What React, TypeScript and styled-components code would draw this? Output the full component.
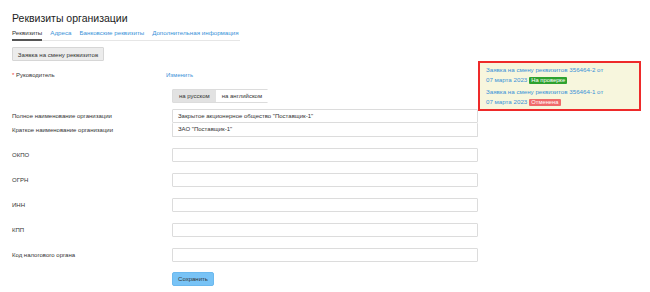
import React from "react";
import styled, { createGlobalStyle } from "styled-components";

const Global = createGlobalStyle`
  html, body { margin: 0; padding: 0; background: #fff; }
  body { font-family: "Liberation Sans", Arial, sans-serif; color: #333; }
  * { box-sizing: border-box; }
`;

const Page = styled.div`
  width: 650px;
  height: 292px;
  padding: 0 0 0 12px;
  overflow: hidden;
`;

const Title = styled.h1`
  margin: 11px 0 0;
  font-size: 10.5px;
  line-height: 14px;
  font-weight: normal;
  color: #222;
`;

const Tabs = styled.div`
  display: flex;
  gap: 8px;
  width: 228px;
  margin-top: 1px;
  border-bottom: 1px solid #e6e6e6;
`;

const Tab = styled.a<{ $active?: boolean }>`
  font-size: 6.2px;
  line-height: 10px;
  padding: 2px 0 1px;
  margin-bottom: -1px;
  color: ${(p) => (p.$active ? "#333" : "#3a92d8")};
  border-bottom: 2px solid ${(p) => (p.$active ? "#555" : "transparent")};
  white-space: nowrap;
`;

const GrayButton = styled.button`
  display: block;
  margin-top: 6px;
  height: 14px;
  width: 92px;
  padding: 0;
  font-family: inherit;
  font-size: 6.1px;
  color: #333;
  background: #ececec;
  border: 1px solid #d6d6d6;
  border-radius: 1px;
`;

const Content = styled.div`
  display: flex;
  align-items: flex-start;
`;

const Form = styled.div`
  width: 466px;
  padding-top: 7px;
`;

const Row = styled.div<{ $mt?: number }>`
  display: grid;
  grid-template-columns: 160px 306px;
  align-items: center;
  height: 14px;
  margin-top: ${(p) => p.$mt ?? 0}px;
`;

const Label = styled.div`
  font-size: 6px;
  line-height: 14px;
  color: #333;
  white-space: nowrap;
`;

const Req = styled.span`
  color: #e33;
`;

const Link = styled.a`
  font-size: 6px;
  line-height: 14px;
  color: #3a92d8;
  margin-left: -6px;
`;

const Toggle = styled.div`
  display: flex;
  width: 96px;
  height: 14px;
  border: 1px solid #dcdcdc;
  border-radius: 1px;
`;

const ToggleItem = styled.div<{ $active?: boolean }>`
  font-size: 6px;
  line-height: 12px;
  padding: 0 6px;
  background: ${(p) => (p.$active ? "#e2e2e2" : "#fff")};
  white-space: nowrap;
`;

const Input = styled.div<{ $joined?: boolean }>`
  height: 14px;
  border: 1px solid #dcdcdc;
  border-top-width: ${(p) => (p.$joined ? 0 : 1)}px;
  border-radius: 1px;
  font-size: 6px;
  line-height: 12px;
  padding-left: 5px;
  color: #333;
  white-space: nowrap;
`;

const SaveButton = styled.button`
  height: 14px;
  width: 42px;
  padding: 0;
  font-family: inherit;
  font-size: 6px;
  color: #333;
  background: #78c3f6;
  border: 1px solid #6cb9ee;
  border-radius: 2px;
  justify-self: start;
`;

const Aside = styled.div`
  width: 163px;
  background: #f7f6dd;
  border: 2px solid #ee2a2a;
  padding: 2px 6px 2px;
`;

const Item = styled.div`
  font-size: 6.2px;
  line-height: 10px;
  color: #3a92d8;
  & + & {
    margin-top: 2px;
  }
`;

const Badge = styled.span<{ $tone: "green" | "red" }>`
  display: inline-block;
  margin-left: 2px;
  padding: 0 2px;
  font-size: 5.8px;
  line-height: 7px;
  color: #fff;
  background: ${(p) => (p.$tone === "green" ? "#2ea22e" : "#f06a6a")};
  border-radius: 1px;
  vertical-align: 0;
`;

const fields = ["ОКПО", "ОГРН", "ИНН", "КПП", "Код налогового органа"];

export default function App() {
  return (
    <>
      <Global />
      <Page>
        <Title>Реквизиты организации</Title>
        <Tabs>
          <Tab $active>Реквизиты</Tab>
          <Tab>Адреса</Tab>
          <Tab>Банковские реквизиты</Tab>
          <Tab>Дополнительная информация</Tab>
        </Tabs>
        <GrayButton>Заявка на смену реквизитов</GrayButton>
        <Content>
          <Form>
            <Row>
              <Label>
                <Req>*</Req> Руководитель
              </Label>
              <Link>Изменить</Link>
            </Row>
            <Row $mt={7}>
              <div />
              <Toggle>
                <ToggleItem $active>на русском</ToggleItem>
                <ToggleItem>на английском</ToggleItem>
              </Toggle>
            </Row>
            <Row $mt={6}>
              <Label>Полное наименование организации</Label>
              <Input>Закрытое акционерное общество "Поставщик-1"</Input>
            </Row>
            <Row>
              <Label>Краткое наименование организации</Label>
              <Input $joined>ЗАО "Поставщик-1"</Input>
            </Row>
            {fields.map((f) => (
              <Row key={f} $mt={11}>
                <Label>{f}</Label>
                <Input />
              </Row>
            ))}
            <Row $mt={10}>
              <div />
              <SaveButton>Сохранить</SaveButton>
            </Row>
          </Form>
          <Aside>
            <Item>
              Заявка на смену реквизитов 356464-2 от
              <br />
              07 марта 2023<Badge $tone="green">На проверке</Badge>
            </Item>
            <Item>
              Заявка на смену реквизитов 356464-1 от
              <br />
              07 марта 2023<Badge $tone="red">Отменена</Badge>
            </Item>
          </Aside>
        </Content>
      </Page>
    </>
  );
}
